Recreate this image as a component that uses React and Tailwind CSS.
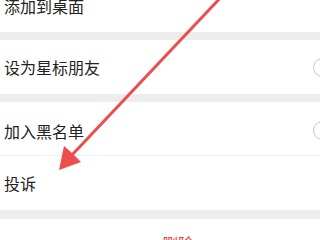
import React from 'react'

const rows = [
    { id: 'star', label: '设为星标朋友', toggle: true },
]

function Toggle() {
    // only the knob edge shows at the right border
    return <div className="ml-auto mr-[-12px] h-[19px] w-[19px] shrink-0 rounded-full border border-[#c8c8c8] bg-white"></div>
}

function Row({ label, toggle, className = '' }) {
    return (
        <div className={`flex h-[54px] items-center bg-white pl-1 text-[16px] text-[#222] ${className}`}>
            <span>{label}</span>
            {toggle && <Toggle />}
        </div>
    )
}

export default function App() {
    return (
        <div
            className="relative h-[240px] w-[320px] overflow-hidden bg-[#ededed]"
            style={{ fontFamily: '"Noto Sans CJK SC", "Noto Sans", sans-serif' }}
        >
            <Row label="添加到桌面" className="-mt-[22px] pt-[2px] h-[52px]" />
            <Row label={rows[0].label} toggle className="mt-2" />
            <Row label="加入黑名单" toggle className="mt-2 h-[54px] border-b border-[#f0f0f0] pt-1" />
            <Row label="投诉" />
            <div className="mt-[9px] h-[40px] bg-white pl-[162px] pt-[12px] text-[16px] leading-[24px] text-[#e64340]">删除</div>

            <svg className="pointer-events-none absolute left-0 top-0" width="320" height="240" viewBox="0 0 320 240">
                <line x1="224" y1="-6" x2="72" y2="155" stroke="#ee4d4d" strokeWidth="3" strokeLinecap="round" />
                <polygon points="59,170 64,146 72,153 81,162" fill="#ee4d4d" />
            </svg>
        </div>
    )
}
